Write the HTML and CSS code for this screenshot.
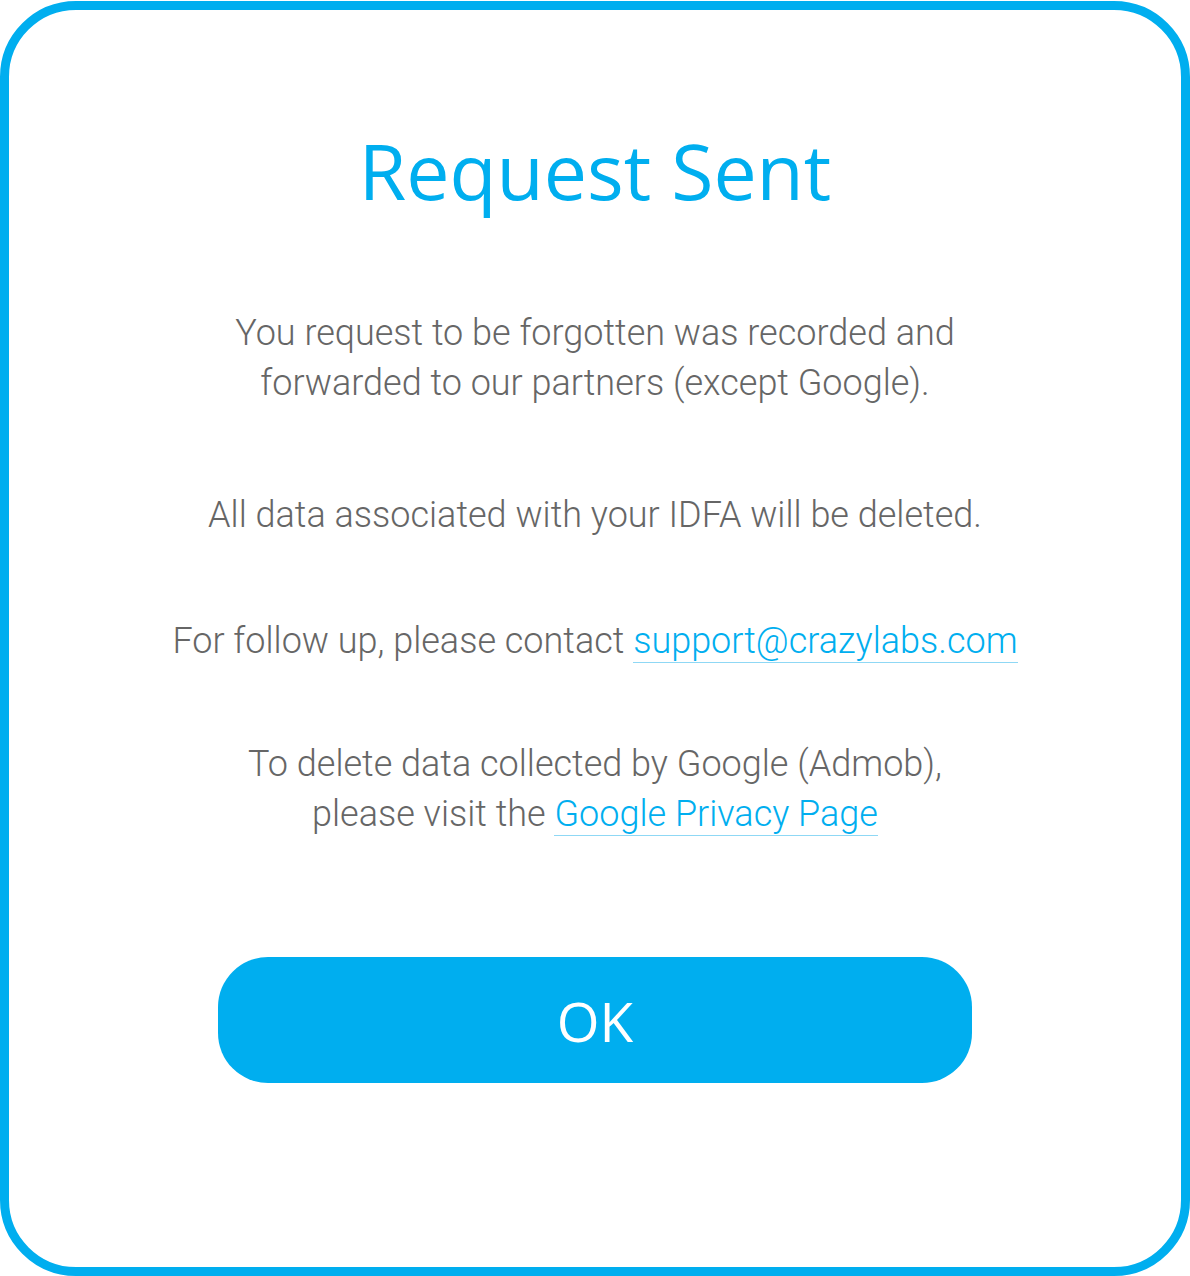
FILE: index.html
```html
<!DOCTYPE html>
<html>
<head>
<meta charset="utf-8">
<link rel="stylesheet" href="styles.css">
</head>
<body>
<div class="card">
  <h1 class="title">Request Sent</h1>
  <p class="msg msg-first">You request to be forgotten was recorded and<br>forwarded to our partners (except Google).</p>
  <p class="msg msg-second">All data associated with your IDFA will be deleted.</p>
  <p class="msg msg-third">For follow up, please contact <a class="link" href="#">support@crazylabs.com</a></p>
  <p class="msg msg-fourth">To delete data collected by Google (Admob),<br>please visit the <a class="link" href="#">Google Privacy Page</a></p>
  <button class="ok">OK</button>
</div>
</body>
</html>
```
FILE: styles.css
```css
html, body {
  margin: 0;
  padding: 0;
  background: #fff;
}
.card {
  box-sizing: border-box;
  width: 1190px;
  height: 1275px;
  margin-top: 1px;
  border: 9px solid #00aeef;
  border-radius: 76px;
  display: flex;
  flex-direction: column;
  align-items: center;
  text-align: center;
}
.title {
  margin: 106px 0 0;
  font-family: "Open Sans", sans-serif;
  font-weight: 400;
  font-size: 77px;
  line-height: 110px;
  color: #00aeef;
}
.msg {
  margin: 0;
  font-family: Roboto, sans-serif;
  font-weight: 300;
  font-size: 36px;
  line-height: 50px;
  color: #666;
}
.msg-first { margin-top: 82px; }
.msg-second { margin-top: 82px; }
.msg-third { margin-top: 76px; }
.msg-fourth { margin-top: 73px; }
.link {
  color: #00aeef;
  text-decoration: none;
  border-bottom: 1px solid #8fd8f5;
}
.ok {
  margin-top: 118px;
  width: 754px;
  height: 126px;
  border: none;
  border-radius: 50px;
  background: #00aeef;
  color: #fff;
  font-family: "Open Sans", sans-serif;
  font-size: 55px;
  line-height: 1;
}
```
